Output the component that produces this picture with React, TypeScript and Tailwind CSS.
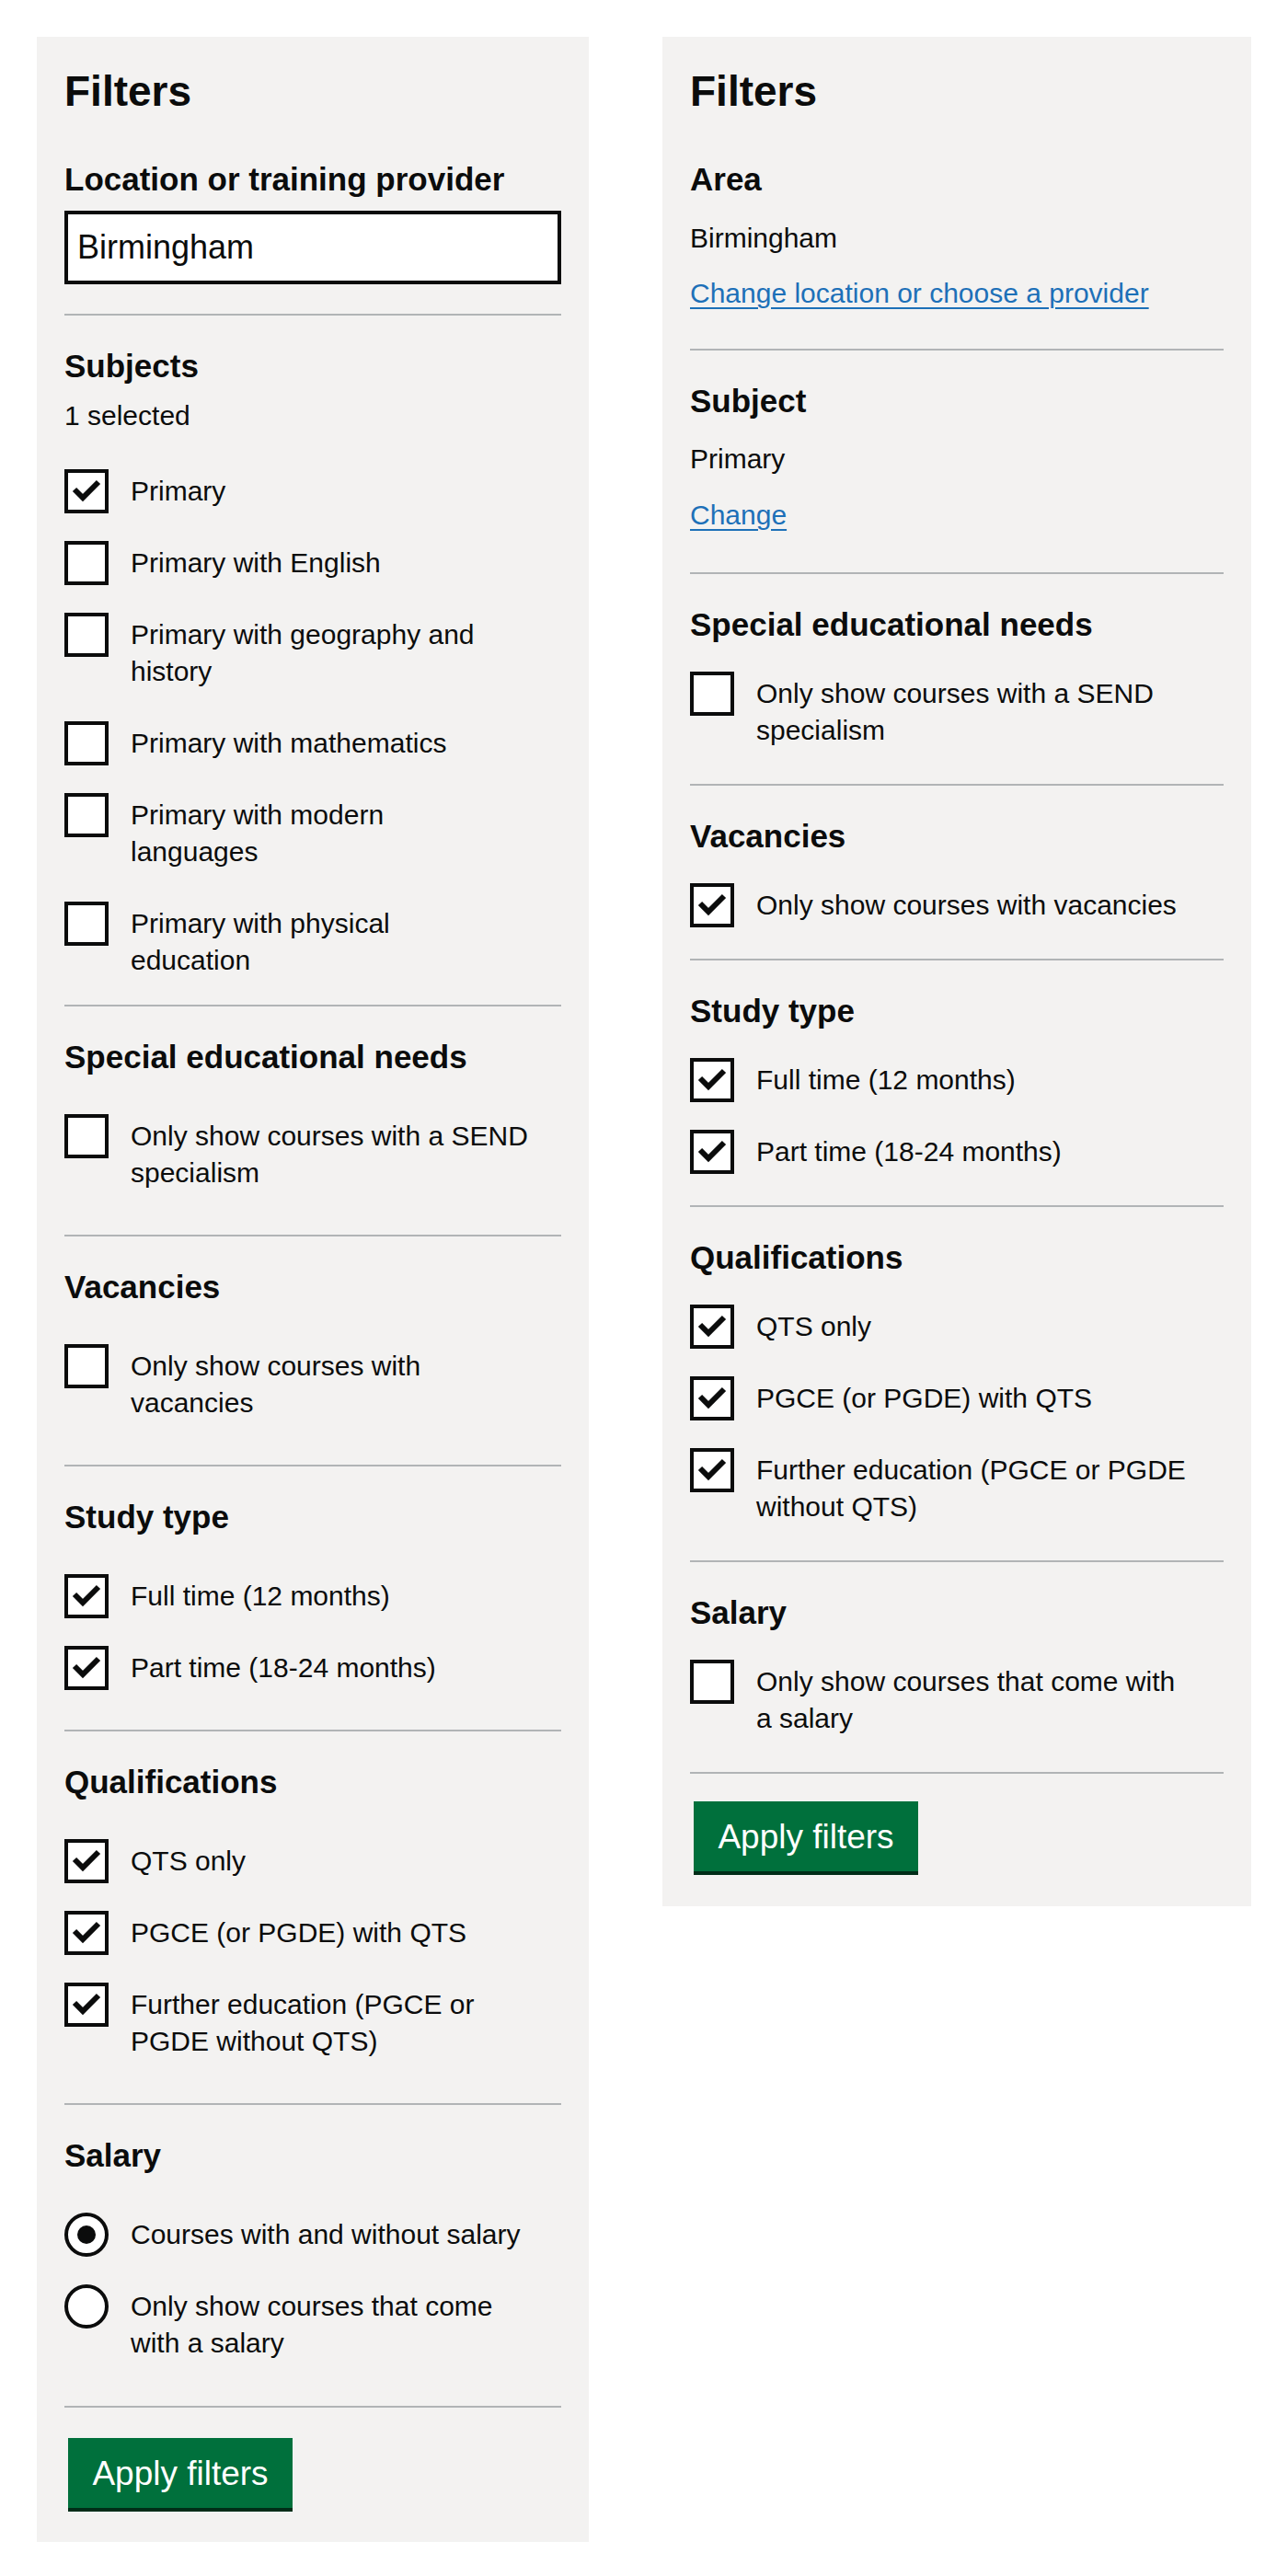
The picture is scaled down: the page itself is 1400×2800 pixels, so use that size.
import React from "react";

type Item = { lines: string[]; checked?: boolean };

function Tick() {
  return (
    <svg width="40" height="40" viewBox="0 0 40 40" className="block">
      <polyline
        points="7,18 16,27 33,10"
        fill="none"
        stroke="#0b0c0c"
        strokeWidth="6"
        strokeLinecap="butt"
        strokeLinejoin="miter"
      />
    </svg>
  );
}

function Checkbox({ lines, checked }: Item) {
  return (
    <div className="flex gap-[24px]">
      <span className="w-[48px] h-[48px] shrink-0 border-[4px] border-[#0b0c0c] bg-white">
        {checked && <Tick />}
      </span>
      <span className="py-[4px] text-[30px] leading-[40px] whitespace-nowrap">
        {lines.map((l) => (
          <span key={l} className="block">
            {l}
          </span>
        ))}
      </span>
    </div>
  );
}

function Radio({ lines, checked }: Item) {
  return (
    <div className="flex gap-[24px]">
      <span className="w-[48px] h-[48px] shrink-0 rounded-full border-[4px] border-[#0b0c0c] bg-white flex items-center justify-center">
        {checked && <span className="w-[20px] h-[20px] rounded-full bg-[#0b0c0c]" />}
      </span>
      <span className="py-[4px] text-[30px] leading-[40px] whitespace-nowrap">
        {lines.map((l) => (
          <span key={l} className="block">
            {l}
          </span>
        ))}
      </span>
    </div>
  );
}

function Divider({ className }: { className: string }) {
  return <div className={"h-[2px] bg-[#b1b4b6] " + className} />;
}

function Heading({ children, className = "" }: { children: React.ReactNode; className?: string }) {
  return <h3 className={"text-[35px] font-bold leading-[44px] " + className}>{children}</h3>;
}

function ApplyButton({ className }: { className: string }) {
  return (
    <button
      className={
        "ml-[4px] w-[244px] h-[76px] bg-[#00703c] text-white text-[37px] leading-none shadow-[0_4px_0_#002d18] flex items-center justify-center " +
        className
      }
    >
      Apply filters
    </button>
  );
}

const subjects: Item[] = [
  { lines: ["Primary"], checked: true },
  { lines: ["Primary with English"] },
  { lines: ["Primary with geography and", "history"] },
  { lines: ["Primary with mathematics"] },
  { lines: ["Primary with modern", "languages"] },
  { lines: ["Primary with physical", "education"] },
];

const leftGroups: { title: string; items: Item[] }[] = [
  { title: "Special educational needs", items: [{ lines: ["Only show courses with a SEND", "specialism"] }] },
  { title: "Vacancies", items: [{ lines: ["Only show courses with", "vacancies"] }] },
  {
    title: "Study type",
    items: [
      { lines: ["Full time (12 months)"], checked: true },
      { lines: ["Part time (18-24 months)"], checked: true },
    ],
  },
  {
    title: "Qualifications",
    items: [
      { lines: ["QTS only"], checked: true },
      { lines: ["PGCE (or PGDE) with QTS"], checked: true },
      { lines: ["Further education (PGCE or", "PGDE without QTS)"], checked: true },
    ],
  },
];

const rightGroups: { title: string; items: Item[] }[] = [
  { title: "Special educational needs", items: [{ lines: ["Only show courses with a SEND", "specialism"] }] },
  { title: "Vacancies", items: [{ lines: ["Only show courses with vacancies"], checked: true }] },
  {
    title: "Study type",
    items: [
      { lines: ["Full time (12 months)"], checked: true },
      { lines: ["Part time (18-24 months)"], checked: true },
    ],
  },
  {
    title: "Qualifications",
    items: [
      { lines: ["QTS only"], checked: true },
      { lines: ["PGCE (or PGDE) with QTS"], checked: true },
      { lines: ["Further education (PGCE or PGDE", "without QTS)"], checked: true },
    ],
  },
  { title: "Salary", items: [{ lines: ["Only show courses that come with", "a salary"] }] },
];

function LeftPanel() {
  return (
    <div className="w-[600px] shrink-0 bg-[#f3f2f1] px-[30px] pt-[30px] pb-[37px]">
      <h2 className="text-[46px] font-bold leading-[58px]">Filters</h2>
      <Heading className="mt-[45px]">Location or training provider</Heading>
      <div className="mt-[12px] h-[80px] border-[4px] border-[#0b0c0c] bg-white px-[10px] flex items-center text-[36px]">
        Birmingham
      </div>
      <Divider className="mt-[32px]" />
      <Heading className="mt-[33px]">Subjects</Heading>
      <p className="mt-[12px] text-[30px] leading-[40px]">1 selected</p>
      <div className="mt-[38px] flex flex-col gap-[30px]">
        {subjects.map((s) => (
          <Checkbox key={s.lines.join()} {...s} />
        ))}
      </div>
      <Divider className="mt-[24px]" />
      {leftGroups.map((g) => (
        <div key={g.title}>
          <Heading className="mt-[33px]">{g.title}</Heading>
          <div className="mt-[40px] flex flex-col gap-[30px]">
            {g.items.map((s) => (
              <Checkbox key={s.lines.join()} {...s} />
            ))}
          </div>
          <Divider className="mt-[43px]" />
        </div>
      ))}
      <Heading className="mt-[33px]">Salary</Heading>
      <div className="mt-[40px] flex flex-col gap-[30px]">
        <Radio lines={["Courses with and without salary"]} checked />
        <Radio lines={["Only show courses that come", "with a salary"]} />
      </div>
      <Divider className="mt-[44px]" />
      <ApplyButton className="mt-[33px]" />
    </div>
  );
}

function RightPanel() {
  return (
    <div className="w-[640px] shrink-0 bg-[#f3f2f1] px-[30px] pt-[30px] pb-[38px]">
      <h2 className="text-[46px] font-bold leading-[58px]">Filters</h2>
      <Heading className="mt-[45px]">Area</Heading>
      <p className="mt-[22px] text-[30px] leading-[40px]">Birmingham</p>
      <p className="mt-[20px] text-[30px] leading-[40px]">
        <a href="#" className="text-[#1d70b8] underline decoration-[2px] underline-offset-[5px]">
          Change location or choose a provider
        </a>
      </p>
      <Divider className="mt-[40px]" />
      <Heading className="mt-[33px]">Subject</Heading>
      <p className="mt-[21px] text-[30px] leading-[40px]">Primary</p>
      <p className="mt-[21px] text-[30px] leading-[40px]">
        <a href="#" className="text-[#1d70b8] underline decoration-[2px] underline-offset-[5px]">
          Change
        </a>
      </p>
      <Divider className="mt-[42px]" />
      {rightGroups.map((g) => (
        <div key={g.title}>
          <Heading className="mt-[33px]">{g.title}</Heading>
          <div className="mt-[29px] flex flex-col gap-[30px]">
            {g.items.map((s) => (
              <Checkbox key={s.lines.join()} {...s} />
            ))}
          </div>
          <Divider className="mt-[34px]" />
        </div>
      ))}
      <ApplyButton className="mt-[30px]" />
    </div>
  );
}

export default function App() {
  return (
    <div className="min-h-[2800px] bg-white text-[#0b0c0c] font-['Liberation_Sans',Arial,sans-serif]">
      <div className="flex items-start gap-[80px] pl-[40px] pt-[40px]">
        <LeftPanel />
        <RightPanel />
      </div>
    </div>
  );
}
